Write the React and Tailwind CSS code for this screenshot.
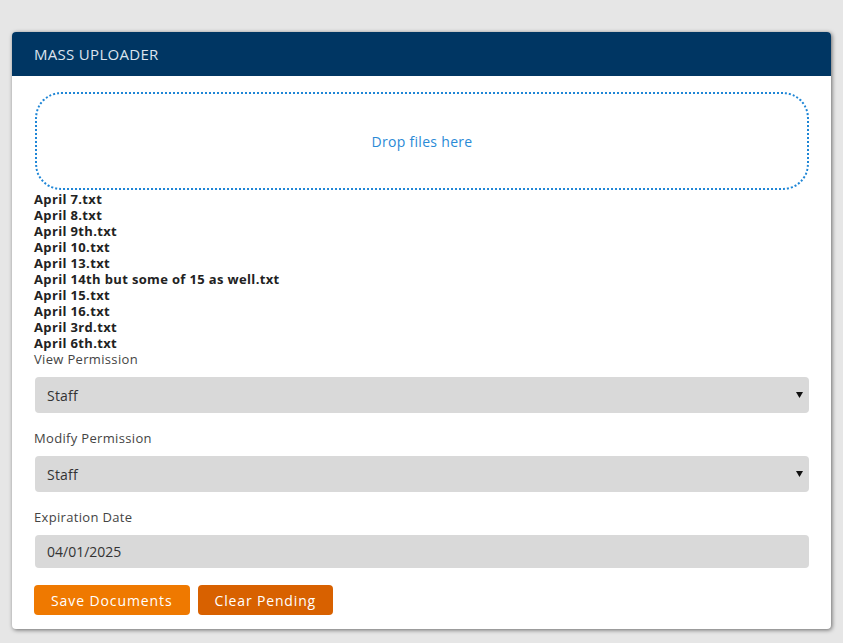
import React from "react";

const files = [
  "April 7.txt",
  "April 8.txt",
  "April 9th.txt",
  "April 10.txt",
  "April 13.txt",
  "April 14th but some of 15 as well.txt",
  "April 15.txt",
  "April 16.txt",
  "April 3rd.txt",
  "April 6th.txt",
];

function Caret() {
  return (
    <svg width="7" height="6" viewBox="0 0 7 6" className="shrink-0">
      <path d="M0 0 H7 L3.5 6 Z" fill="#111" />
    </svg>
  );
}

function SelectBox({ value }) {
  return (
    <div className="h-[36px] rounded-[4px] bg-[#d9d9d9] flex items-center justify-between pl-[12px] pr-[6px] text-[14px] tracking-[0.2px] text-[#333]">
      <span>{value}</span>
      <Caret />
    </div>
  );
}

export default function App() {
  return (
    <div className="min-h-[643px] bg-[#e6e6e6] pt-[32px] px-[12px] font-['Open_Sans',sans-serif]">
      <div className="bg-white rounded-[4px] shadow-[1px_1px_4px_rgba(0,0,0,0.55)] overflow-hidden">
        <div className="h-[44px] bg-[#003663] flex items-center px-[22px] text-[15px] font-medium tracking-[0.3px] text-[#dce4ee]">
          MASS UPLOADER
        </div>
        <div className="px-[22px] pt-[16px] pb-[14px]">
          <div className="ml-[1px] h-[98px] rounded-[26px] border-2 border-dotted border-[#1f86d6] flex items-center justify-center text-[14px] tracking-[0.3px] text-[#2a8ad6]">
            Drop files here
          </div>
          <div className="pt-[1px]">
            {files.map((f) => (
              <div key={f} className="text-[13px] leading-[16px] font-bold tracking-[0.35px] text-[#222]">
                {f}
              </div>
            ))}
          </div>
          <div className="text-[13px] leading-[16px] tracking-[0.33px] text-[#444]">View Permission</div>
          <div className="mt-[10px] ml-[1px]">
            <SelectBox value="Staff" />
          </div>
          <div className="mt-[17px] text-[13px] leading-[16px] tracking-[0.33px] text-[#444]">Modify Permission</div>
          <div className="mt-[10px] ml-[1px]">
            <SelectBox value="Staff" />
          </div>
          <div className="mt-[17px] text-[13px] leading-[16px] tracking-[0.33px] text-[#444]">Expiration Date</div>
          <div className="mt-[10px] ml-[1px] h-[33px] rounded-[4px] bg-[#d9d9d9] flex items-center pl-[12px] text-[14px] text-[#333]">
            04/01/2025
          </div>
          <div className="mt-[17px] flex gap-[8px]">
            <button className="h-[30px] px-[17px] rounded-[4px] bg-[#ef7900] text-white text-[14px] font-medium tracking-[0.9px]">
              Save Documents
            </button>
            <button className="h-[30px] px-[17px] rounded-[4px] bg-[#d86100] text-white text-[14px] font-medium tracking-[0.85px]">
              Clear Pending
            </button>
          </div>
        </div>
      </div>
    </div>
  );
}
